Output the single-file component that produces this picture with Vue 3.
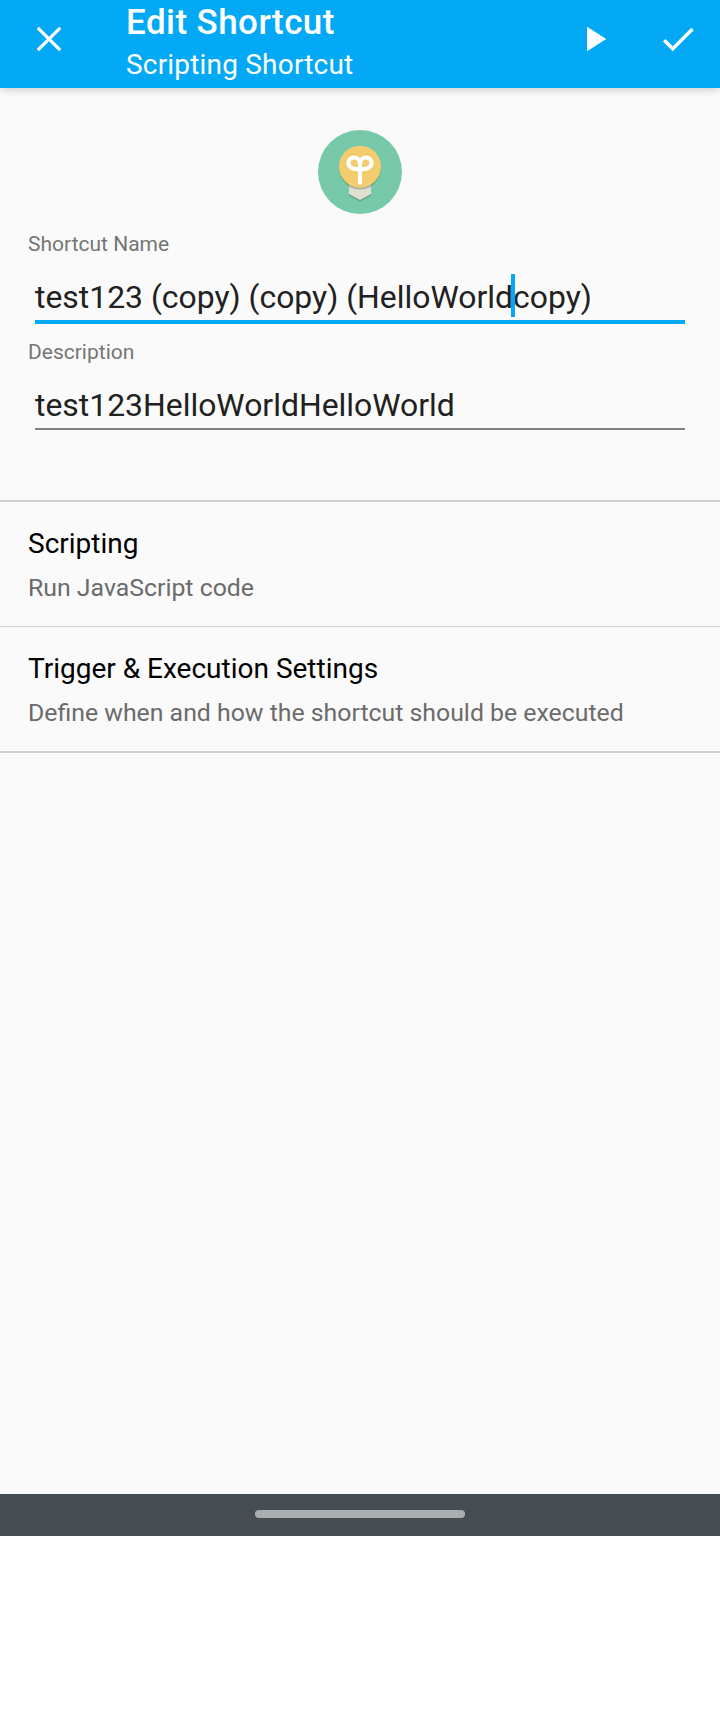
<script setup>
const fields = [
  { label: 'Shortcut Name', before: 'test123 (copy) (copy) (HelloWorld', after: 'copy)', focused: true },
  { label: 'Description', before: 'test123HelloWorldHelloWorld', after: '', focused: false },
]
const items = [
  { title: 'Scripting', text: 'Run JavaScript code' },
  { title: 'Trigger & Execution Settings', text: 'Define when and how the shortcut should be executed' },
]
</script>

<template>
  <div class="screen">
    <header class="bar">
      <svg class="icon close" viewBox="0 0 24 24"><path d="M5.600 5.600 18.400 18.400M18.400 5.600 5.600 18.400" /></svg>
      <div class="heading">
        <h1>Edit Shortcut</h1>
        <p>Scripting Shortcut</p>
      </div>
      <svg class="icon play" viewBox="0 0 24 24"><path d="M8 5v14l11-7z" /></svg>
      <svg class="icon" viewBox="0 0 24 24"><path d="M9 16.17 4.83 12l-1.42 1.41L9 19 21 7l-1.41-1.41z" /></svg>
    </header>

    <main class="content">
      <svg class="logo" viewBox="0 0 84 84">
        <circle cx="42" cy="42" r="42" fill="#77c9a9" />
        <path d="M31 56h22v9.500L42 71.700 31 65.500z" fill="#5fa188" />
        <path d="M31 54h22v10L42 70 31 64z" fill="#e0e0d1" />
        <circle cx="42" cy="38.200" r="21" fill="#5fa188" />
        <path d="M31 57q11 5.200 22 0v-4h-22z" fill="#b3b3a7" />
        <circle cx="42" cy="36.700" r="21" fill="#f3cc6e" />
        <path
          d="M42 52.700V34.500C42 29.500 39.200 27.400 36 27.400c-3.300 0-5.500 2.400-5.500 5.600 0 4.300 4.200 6.300 11.500 6.300s11.500-2 11.500-6.300c0-3.200-2.200-5.600-5.500-5.600-3.200 0-6 2.100-6 7.100"
          fill="none" stroke="#fff" stroke-width="4" stroke-linecap="round"
        />
      </svg>

      <div v-for="f in fields" :key="f.label" class="field" :class="{ focused: f.focused }">
        <label>{{ f.label }}</label>
        <div class="input"><span>{{ f.before }}</span><i v-if="f.focused" class="caret"></i><span>{{ f.after }}</span></div>
      </div>

      <section class="list">
        <div v-for="item in items" :key="item.title" class="item">
          <h2>{{ item.title }}</h2>
          <p>{{ item.text }}</p>
        </div>
      </section>
    </main>

    <footer class="nav"><span class="pill"></span></footer>
  </div>
</template>

<style>
body { background: #fff; }
</style>

<style scoped>
.screen {
  width: 720px;
  height: 1536px;
  display: flex;
  flex-direction: column;
  background: #fafafa;
  font-family: Roboto, sans-serif;
}
h1, h2, p { margin: 0; font-weight: 400; white-space: nowrap; }
.bar {
  box-sizing: border-box;
  height: 88px;
  flex: none;
  display: flex;
  align-items: flex-start;
  padding: 3px 21px 0 28px;
  background: #03a9f4;
  color: #fff;
  box-shadow: 0 2px 8px rgba(0, 0, 0, .17);
}
.icon { width: 42px; height: 42px; flex: none; fill: currentColor; margin-top: 15px; }
.close { fill: none; stroke: currentColor; stroke-width: 1.8; }
.play { margin-right: 42px; }
.heading { flex: 1; margin-left: 56px; }
.heading h1 { font-size: 35px; line-height: 40px; font-weight: 500; letter-spacing: .43px; }
.heading p { font-size: 28px; line-height: 36px; margin-top: 4px; letter-spacing: .19px; }
.content { flex: 1; display: flex; flex-direction: column; }
.logo { width: 84px; height: 84px; margin: 42px auto 18px; flex: none; }
.field { padding: 0 28px; margin-bottom: 16px; }
.field label { display: block; font-size: 21px; line-height: 24px; color: #757575; }
.input {
  display: flex;
  height: 43px;
  margin: 21px 7px 0;
  border-bottom: 2px solid #7f7f7f;
  font-size: 31.9px;
  line-height: 40px;
  color: #212121;
  white-space: pre;
}
.focused .input { border-bottom: 4px solid #03a9f4; }
.caret { width: 4px; height: 43px; margin: -3px -2px 0; background: #03a9f4; z-index: 1; }
.list { margin-top: 54px; border-top: 2px solid #d0d0d0; border-bottom: 2px solid #d0d0d0; }
.item { padding: 26px 28px 24px; }
.item + .item { border-top: 1px solid #d0d0d0; }
.item h2 { font-size: 28px; line-height: 32px; color: #000; }
.item p { font-size: 24.84px; line-height: 28px; margin-top: 14px; color: #6b6b6b; }
.nav { height: 42px; flex: none; display: flex; justify-content: center; align-items: center; background: #454d52; }
.pill { width: 210px; height: 8px; margin-top: -2px; border-radius: 4px; background: #a9adaf; }
</style>
